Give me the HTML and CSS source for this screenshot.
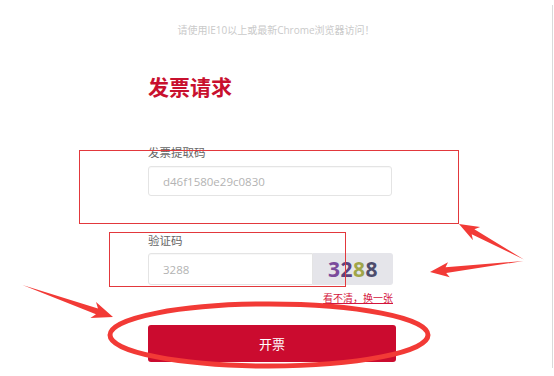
FILE: index.html
```html
<!DOCTYPE html>
<html lang="zh-CN">
<head>
<meta charset="utf-8">
<title>发票请求</title>
<link rel="stylesheet" href="styles.css">
</head>
<body>
<div class="page">
  <p class="notice">请使用IE10以上或最新Chrome浏览器访问！</p>
  <div class="form">
    <h1 class="title">发票请求</h1>
    <label class="label label-first">发票提取码</label>
    <input class="field field-code" type="text" placeholder="d46f1580e29c0830">
    <label class="label label-second">验证码</label>
    <div class="captcha-row">
      <input class="field field-captcha" type="text" placeholder="3288">
      <div class="captcha-img"><span class="c1">3</span><span class="c2">2</span><span class="c3">8</span><span class="c4">8</span></div>
    </div>
    <div class="refresh-row"><a class="refresh" href="#">看不清，换一张</a></div>
    <button class="submit" type="button">开票</button>
  </div>
</div>
<svg class="annotations" width="554" height="376" viewBox="0 0 554 376">
  <rect x="79.5" y="150.5" width="379" height="73" fill="none" stroke="#e2383c" stroke-width="1"/>
  <rect x="109.5" y="232.5" width="236" height="54" fill="none" stroke="#e2383c" stroke-width="1"/>
  <ellipse cx="269" cy="335" rx="159" ry="31" fill="none" stroke="#f23a36" stroke-width="5"/>
  <g fill="#f23a36">
    <polygon transform="translate(459,224) rotate(-151.3)" points="-74,0 -16,-2.8 -20,-7.5 0,0 -20,7.5 -16,2.8"/>
    <polygon transform="translate(430,272) rotate(173.3)" points="-94,0 -16,-2.8 -19,-7.5 0,0 -19,7.5 -16,2.8"/>
    <polygon transform="translate(113,317) rotate(19.4)" points="-96,0 -17,-3 -21,-8.5 0,0 -21,8.5 -17,3"/>
  </g>
</svg>
</body>
</html>
```
FILE: styles.css
```css
html, body {
  margin: 0;
  padding: 0;
  background: #ffffff;
}

body {
  width: 554px;
  height: 376px;
  position: relative;
  overflow: hidden;
  font-family: "Open Sans", "Noto Sans CJK SC", sans-serif;
}

.page {
  box-sizing: border-box;
  width: 553px;
  height: 363px;
  margin-top: 5px;
  border-right: 1px solid #d9d9d9;
  overflow: hidden;
}

.notice {
  margin: 18px 0 0 0;
  text-align: center;
  font-size: 10px;
  line-height: 14px;
  color: #cacaca;
}

.form {
  margin-left: 148px;
  width: 248px;
  display: flex;
  flex-direction: column;
}

.title {
  margin: 37px 0 0 0;
  font-size: 21px;
  line-height: 24px;
  font-weight: bold;
  color: #c8102e;
  font-family: "Noto Sans CJK SC", sans-serif;
}

.label {
  display: block;
  font-size: 11.5px;
  line-height: 16px;
  color: #666666;
  font-family: "Noto Sans CJK SC", sans-serif;
}

.label-first { margin-top: 46px; }
.label-second { margin-top: 36px; }

.field {
  box-sizing: border-box;
  border: 1px solid #e4e4e4;
  border-radius: 3px;
  padding: 0 0 0 14px;
  font-family: "Open Sans", "Noto Sans CJK SC", sans-serif;
  font-size: 11.5px;
  color: #555555;
  background: #ffffff;
  outline: none;
  box-shadow: inset 0 1px 1px rgba(0,0,0,0.03);
}

.field::placeholder { color: #b3b3b3; }

.field-code {
  margin-top: 6px;
  width: 244px;
  height: 30px;
}

.captcha-row {
  margin-top: 5px;
  display: flex;
  width: 245px;
  height: 32px;
}

.field-captcha {
  width: 165px;
  height: 32px;
  border-radius: 3px 0 0 3px;
}

.captcha-img {
  width: 80px;
  height: 32px;
  background: #e5e5ea;
  border-radius: 0 3px 3px 0;
  display: flex;
  align-items: center;
  justify-content: center;
  font-family: "Open Sans", sans-serif;
  font-size: 21px;
  font-weight: bold;
  letter-spacing: 0.5px;
}

.c1 { color: #7b4b9c; }
.c2 { color: #5b4280; }
.c3 { color: #a0a648; }
.c4 { color: #4e4c6c; }

.refresh-row {
  margin-top: 7px;
  width: 245px;
  display: flex;
  justify-content: flex-end;
}

.refresh {
  font-size: 10px;
  line-height: 12px;
  color: #d4143c;
  text-decoration: underline;
  font-family: "Noto Sans CJK SC", sans-serif;
}

.submit {
  margin-top: 21px;
  width: 248px;
  height: 37px;
  border: none;
  border-radius: 3px;
  background: #cb0b2f;
  color: #ffffff;
  font-size: 13px;
  font-family: "Noto Sans CJK SC", sans-serif;
  padding: 0;
}

.annotations {
  position: absolute;
  left: 0;
  top: 0;
  pointer-events: none;
}
```
